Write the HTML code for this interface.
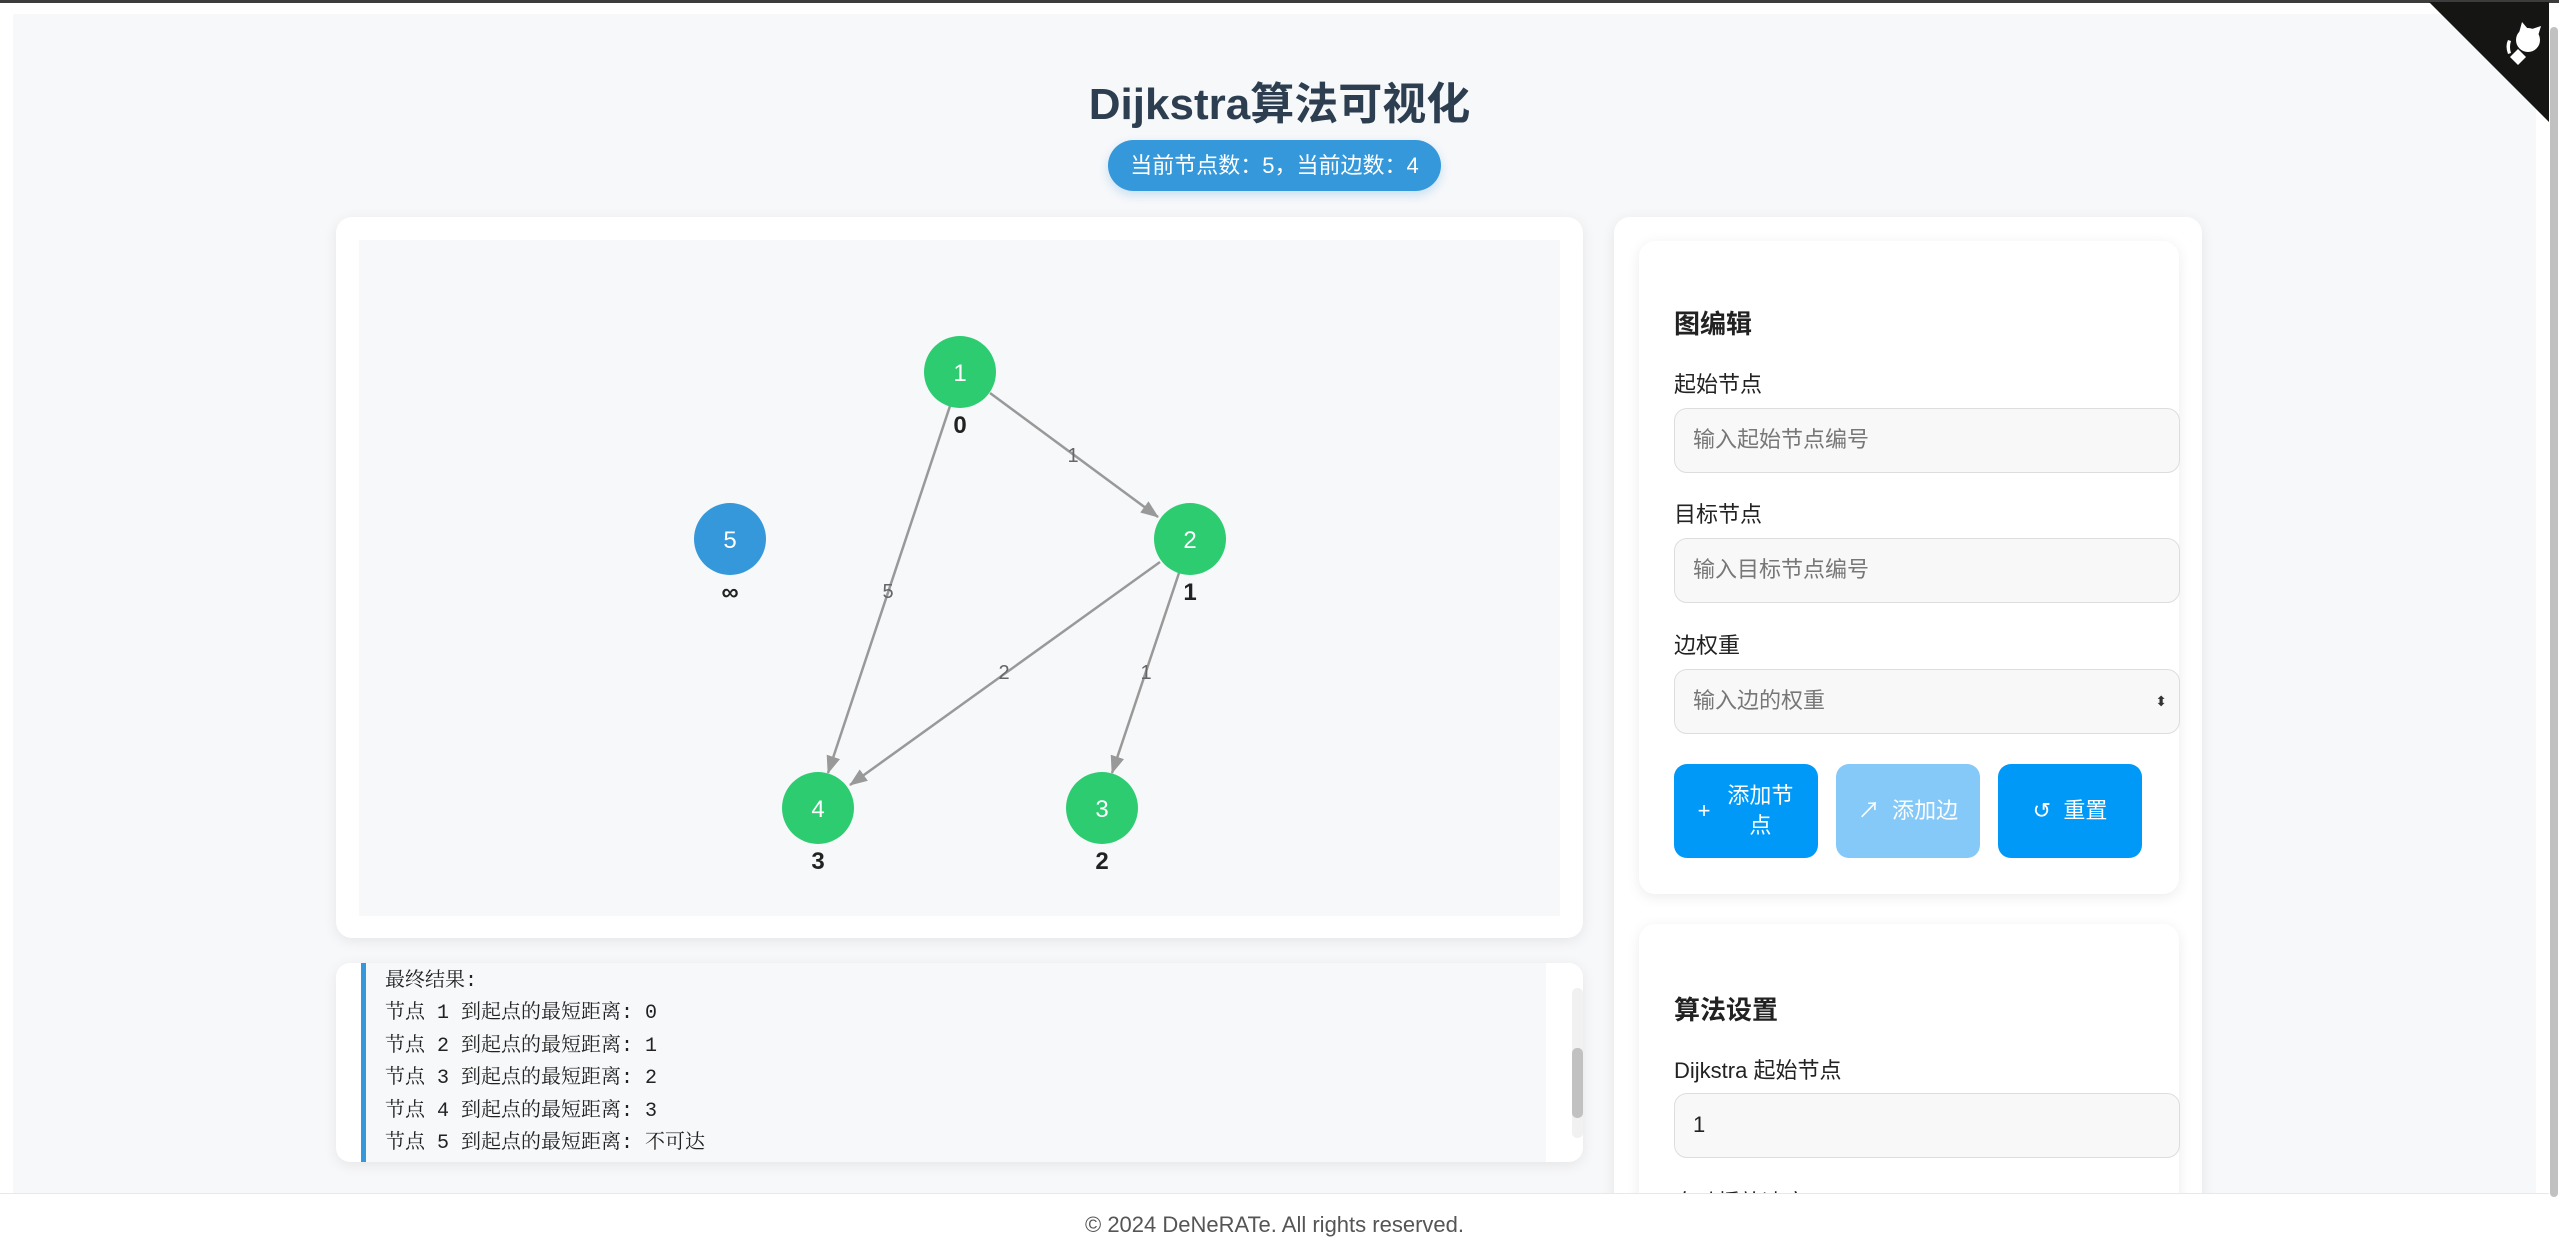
<!DOCTYPE html>
<html style="width:2559px;height:1258px;overflow:hidden"><head><meta charset="utf-8"><style>
*{margin:0;padding:0;box-sizing:border-box}
body{width:2559px;height:1258px;overflow:hidden;background:#fff;font-family:"Liberation Sans","Noto Sans CJK SC",sans-serif;position:relative}
.abs{position:absolute}
.card{background:#fff;border-radius:16px;box-shadow:0 3px 14px rgba(0,0,0,.08)}
.lbl{position:absolute;left:1674px;font-size:22px;color:#222}
.inp{position:absolute;left:1674px;width:506px;height:65px;background:#f8f8f8;border:1.5px solid #ddd;border-radius:13px;font-size:22px;color:#777;padding-left:18px;line-height:62px}
.btn{position:absolute;top:764px;width:144px;height:94px;border-radius:13px;color:#fff;font-size:22px;display:flex;align-items:center;justify-content:center;text-align:center;line-height:30px}
.log{position:absolute;left:385px;font-family:"Liberation Mono","Noto Serif CJK SC",serif;font-size:20px;color:#222}
</style></head><body>
<div class="abs" style="left:0;top:0;width:2559px;height:3px;background:#3c3c3c"></div>
<div class="abs" style="left:13px;top:14px;width:2523px;height:1244px;background:#f7f8fa"></div>
<div class="card abs" style="left:336px;top:217px;width:1247px;height:721px"></div>
<div class="abs" style="left:359px;top:240px;width:1201px;height:676px;background:#f7f8fa"></div>
<svg class="abs" style="left:0;top:0" width="2559" height="1258">
<defs><marker id="b" markerWidth="18" markerHeight="14" refX="17" refY="7" orient="auto" markerUnits="userSpaceOnUse"><path d="M0,0 L18,7 L0,14z" fill="#999"/></marker></defs>
<g stroke="#999" stroke-width="2.5" fill="none">
<line x1="990" y1="393" x2="1158" y2="517" marker-end="url(#b)"/>
<line x1="950" y1="406" x2="828" y2="773" marker-end="url(#b)"/>
<line x1="1160" y1="562" x2="850" y2="785" marker-end="url(#b)"/>
<line x1="1179" y1="573" x2="1112" y2="773" marker-end="url(#b)"/>
</g>
<g font-size="20" fill="#666" text-anchor="middle" font-family="Liberation Sans,sans-serif">
<text x="1073" y="462">1</text><text x="888" y="598">5</text><text x="1004" y="679">2</text><text x="1146" y="679">1</text></g>
<g font-size="24" fill="#fff" text-anchor="middle" font-family="Liberation Sans,sans-serif">
<circle cx="960" cy="372" r="36" fill="#2ecc71"/><text x="960" y="381">1</text>
<circle cx="1190" cy="539" r="36" fill="#2ecc71"/><text x="1190" y="548">2</text>
<circle cx="730" cy="539" r="36" fill="#3498db"/><text x="730" y="548">5</text>
<circle cx="818" cy="808" r="36" fill="#2ecc71"/><text x="818" y="817">4</text>
<circle cx="1102" cy="808" r="36" fill="#2ecc71"/><text x="1102" y="817">3</text></g>
<g font-size="24" font-weight="bold" fill="#222" text-anchor="middle" font-family="Liberation Sans,sans-serif">
<text x="960" y="433">0</text><text x="1190" y="600">1</text><text x="730" y="600">∞</text><text x="818" y="869">3</text><text x="1102" y="869">2</text></g>
</svg>

<div class="abs" style="left:0;width:2559px;top:68px;text-align:center;font-size:44px;font-weight:bold;color:#2c3e50">Dijkstra算法可视化</div>
<div class="abs" style="left:1108px;top:140px;width:333px;height:51px;border-radius:26px;background:#3498db;color:#fff;font-size:22px;line-height:51px;text-align:center;box-shadow:0 4px 10px rgba(52,152,219,.25)">当前节点数：5，当前边数：4</div>

<div class="card abs" style="left:336px;top:963px;width:1247px;height:199px;border-radius:14px"></div>
<div class="abs" style="left:361px;top:963px;width:1185px;height:199px;background:#f7f8fa;border-left:5px solid #3498db"></div>
<div class="abs" style="left:1572px;top:988px;width:11px;height:150px;background:#f1f1f1;border-radius:5px"></div>
<div class="abs" style="left:1572px;top:1048px;width:11px;height:70px;background:#c1c1c1;border-radius:5px"></div>
<div class="log" style="top:963px">最终结果:</div>
<div class="log" style="top:995px">节点 1 到起点的最短距离: 0</div>
<div class="log" style="top:1028px">节点 2 到起点的最短距离: 1</div>
<div class="log" style="top:1060px">节点 3 到起点的最短距离: 2</div>
<div class="log" style="top:1093px">节点 4 到起点的最短距离: 3</div>
<div class="log" style="top:1125px">节点 5 到起点的最短距离: 不可达</div>

<div class="card abs" style="left:1614px;top:217px;width:588px;height:1041px;border-radius:16px 16px 0 0"></div>
<div class="card abs" style="left:1639px;top:241px;width:540px;height:653px"></div>
<div class="card abs" style="left:1639px;top:924px;width:540px;height:334px;border-radius:16px 16px 0 0"></div>
<div class="lbl" style="top:304px;font-size:26px;font-weight:bold">图编辑</div>
<div class="lbl" style="top:367px">起始节点</div>
<div class="inp" style="top:408px">输入起始节点编号</div>
<div class="lbl" style="top:497px">目标节点</div>
<div class="inp" style="top:538px">输入目标节点编号</div>
<div class="lbl" style="top:628px">边权重</div>
<div class="inp" style="top:669px">输入边的权重<span style="position:absolute;right:12px;top:0;font-size:14px;color:#333">⬍</span></div>
<div class="btn" style="left:1674px;background:#0099f7"><span style="margin-right:16px">+</span><span style="width:68px">添加节点</span></div>
<div class="btn" style="left:1836px;background:#85c9f9">↗&nbsp; 添加边</div>
<div class="btn" style="left:1998px;background:#0099f7">↺&nbsp; 重置</div>
<div class="lbl" style="top:990px;font-size:26px;font-weight:bold">算法设置</div>
<div class="lbl" style="top:1053px">Dijkstra 起始节点</div>
<div class="inp" style="top:1093px;color:#222">1</div>
<div class="lbl" style="top:1185px">自动播放速度(ms)</div>

<div class="abs" style="left:0;top:1193px;width:2549px;height:65px;background:#fff;border-top:1px solid #e8e8e8;text-align:center;font-size:22px;color:#555;line-height:62px">© 2024 DeNeRATe. All rights reserved.</div>

<div class="abs" style="left:2549px;top:3px;width:10px;height:1255px;background:#fff"></div>
<div class="abs" style="left:2550px;top:27px;width:8px;height:1170px;background:#c1c1c1;border-radius:4px"></div>
<svg class="abs" style="left:2420px;top:0" width="130" height="125"><polygon points="9,2 129,2 129,122" fill="#151513"/>
<g fill="#fff"><circle cx="108" cy="40" r="12"/><polygon points="99,33 102,22 108,29"/><polygon points="112,29 121,26 118,36"/><path d="M90,57 l8,-8 l8,8 l-8,8z"/><path d="M88,40 q-3,6 0,14 l3,-1 q-2,-6 0,-12z"/></g></svg>
</body></html>
